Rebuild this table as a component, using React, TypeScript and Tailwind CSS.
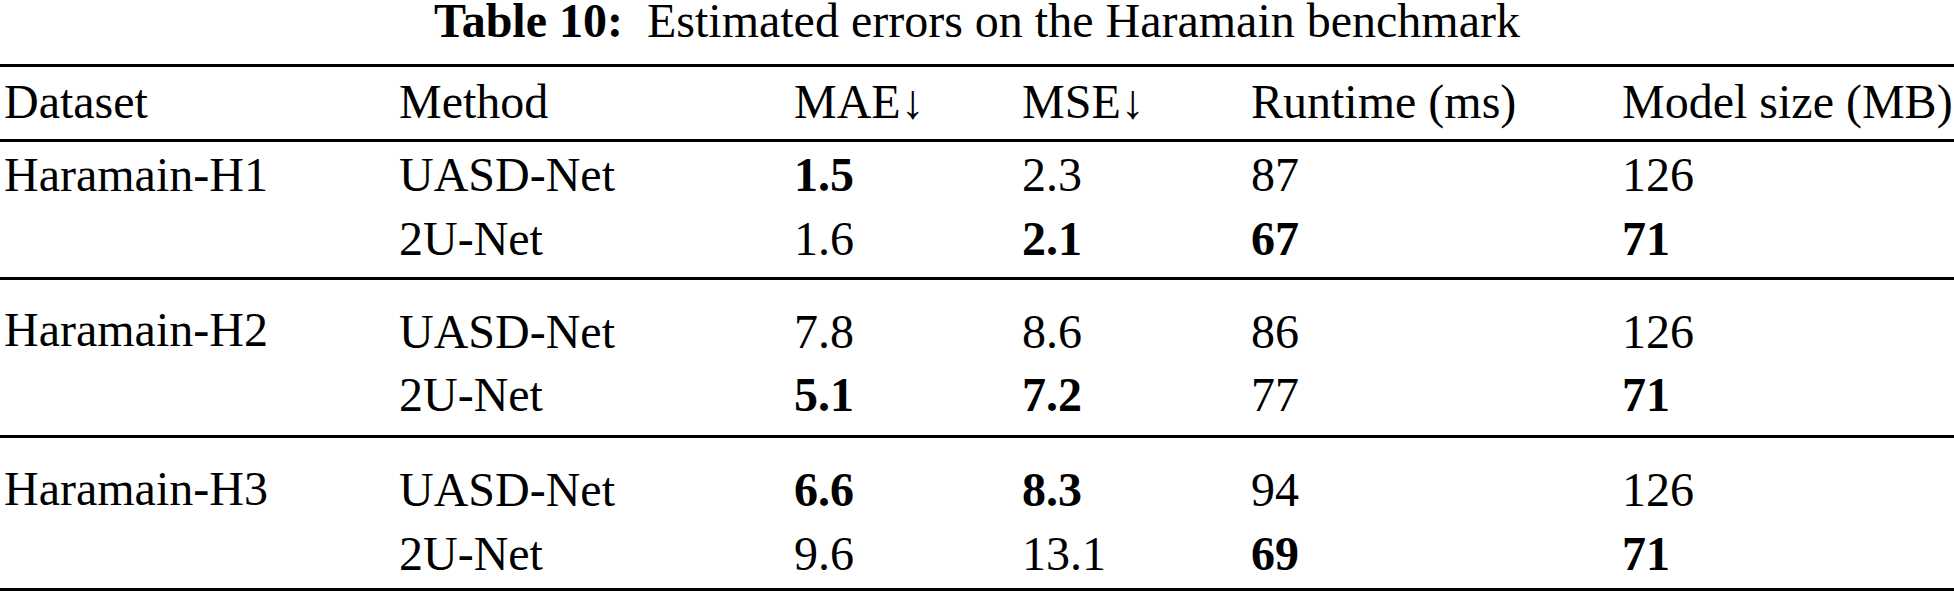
type Cell = { v: string; b?: boolean };
type Row = { method: string; cells: Cell[] };
type Group = { dataset: string; rows: Row[]; dsPad: string; rowPad: string; rowH: string; after: string };

const groups: Group[] = [
  {
    dataset: "Haramain-H1",
    dsPad: "pt-0",
    rowPad: "pt-px",
    rowH: "leading-[64px]",
    after: "mt-[6px]",
    rows: [
      { method: "UASD-Net", cells: [{ v: "1.5", b: true }, { v: "2.3" }, { v: "87" }, { v: "126" }] },
      { method: "2U-Net", cells: [{ v: "1.6" }, { v: "2.1", b: true }, { v: "67", b: true }, { v: "71", b: true }] },
    ],
  },
  {
    dataset: "Haramain-H2",
    dsPad: "pt-[17px]",
    rowPad: "pt-[20px]",
    rowH: "leading-[63px]",
    after: "mt-[9px]",
    rows: [
      { method: "UASD-Net", cells: [{ v: "7.8" }, { v: "8.6" }, { v: "86" }, { v: "126" }] },
      { method: "2U-Net", cells: [{ v: "5.1", b: true }, { v: "7.2", b: true }, { v: "77" }, { v: "71", b: true }] },
    ],
  },
  {
    dataset: "Haramain-H3",
    dsPad: "pt-[18px]",
    rowPad: "pt-[20px]",
    rowH: "leading-[64px]",
    after: "mt-[2px]",
    rows: [
      { method: "UASD-Net", cells: [{ v: "6.6", b: true }, { v: "8.3", b: true }, { v: "94" }, { v: "126" }] },
      { method: "2U-Net", cells: [{ v: "9.6" }, { v: "13.1" }, { v: "69", b: true }, { v: "71", b: true }] },
    ],
  },
];

// column starts: 4 | 399 | 794 | 1022 | 1251 | 1622
const cols = "grid grid-cols-[395px_395px_228px_229px_371px_1fr]";

const Rule = ({ className = "" }: { className?: string }) => (
  <div className={`h-[3px] w-full bg-black ${className}`}></div>
);

const App = () => {
  return (
    <div className="w-[1954px] h-[596px] bg-white text-black font-['Liberation_Serif'] text-[48px] overflow-hidden">
      <div className="pt-px leading-[40px] text-center">
        <span className="font-bold">Table 10:</span>
        <span className="ml-[24px]">Estimated errors on the Haramain benchmark</span>
      </div>
      <Rule className="mt-[23px]" />
      <div className={`${cols} pl-[4px] pt-[2px] leading-[65px]`}>
        <div>Dataset</div>
        <div>Method</div>
        <div>MAE↓</div>
        <div>MSE↓</div>
        <div>Runtime (ms)</div>
        <div className="whitespace-nowrap">Model size (MB)</div>
      </div>
      <Rule className="mt-[5px]" />
      {groups.map((g) => (
        <div key={g.dataset}>
          <div className="flex pl-[4px]">
            <div className={`w-[395px] shrink-0 leading-[65px] ${g.dsPad}`}>{g.dataset}</div>
            <div className={`flex-1 ${g.rowPad}`}>
              {g.rows.map((r) => (
                <div key={r.method} className={`grid grid-cols-[395px_228px_229px_371px_1fr] ${g.rowH}`}>
                  <div>{r.method}</div>
                  {r.cells.map((c, i) => (
                    <div key={i} className={c.b ? "font-bold" : ""}>
                      {c.v}
                    </div>
                  ))}
                </div>
              ))}
            </div>
          </div>
          <Rule className={g.after} />
        </div>
      ))}
    </div>
  );
};

export default App;
